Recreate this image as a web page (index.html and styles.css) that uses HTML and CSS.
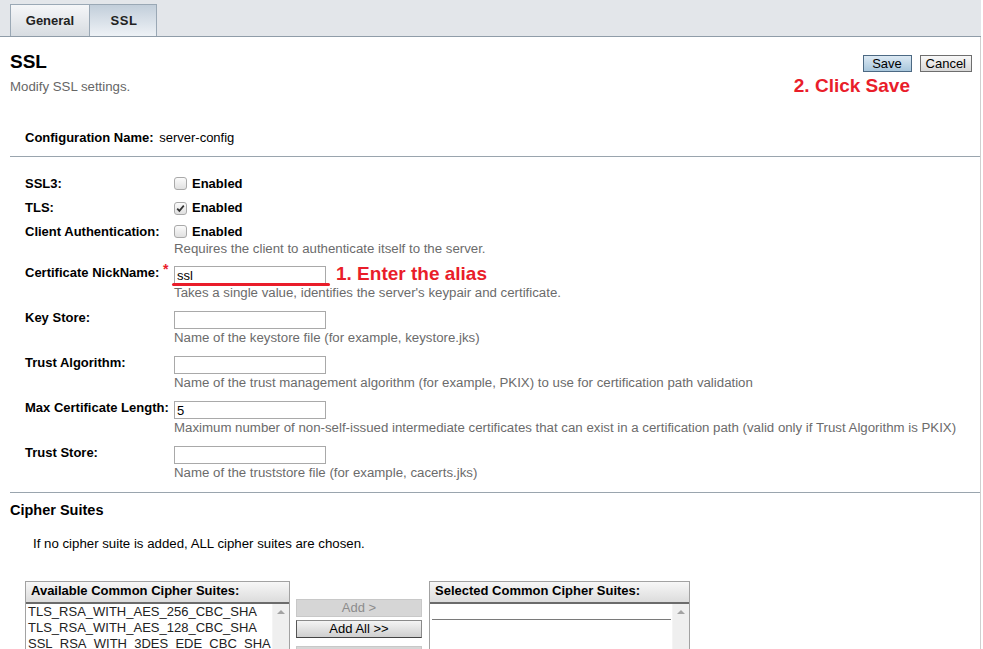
FILE: index.html
```html
<!DOCTYPE html>
<html lang="en">
<head>
  <meta charset="UTF-8" />
  <title>SSL</title>
  <link rel="stylesheet" href="styles.css">
</head>
<body>
  <div class="tabs">
    <a class="tab">General</a>
    <a class="tab active">SSL</a>
  </div>

  <div class="page">
    <div class="title-bar">
      <div>
        <h1>SSL</h1>
        <p class="subtitle">Modify SSL settings.</p>
      </div>
      <div class="actions">
        <button class="btn primary">Save</button>
        <button class="btn">Cancel</button>
        <span class="note note-save">2. Click Save</span>
      </div>
    </div>

    <div class="config-name">
      <span class="label">Configuration Name:</span>
      <span class="value">server-config</span>
    </div>

    <hr>

    <div class="props">
      <div class="prop check-row">
        <label>SSL3:</label>
        <div class="field"><span class="checkbox"></span><b>Enabled</b></div>
      </div>
      <div class="prop check-row">
        <label>TLS:</label>
        <div class="field">
          <span class="checkbox">
            <svg width="11" height="11" viewBox="0 0 11 11"><path d="M2.2 5.6 L4.4 7.9 L8.8 2.6" fill="none" stroke="#333" stroke-width="1.7"/></svg>
          </span><b>Enabled</b>
        </div>
      </div>
      <div class="prop check-row wide">
        <label>Client Authentication:</label>
        <div class="field">
          <div><span class="checkbox"></span><b>Enabled</b></div>
          <div class="help">Requires the client to authenticate itself to the server.</div>
        </div>
      </div>
      <div class="prop">
        <label>Certificate NickName: <sup class="req">*</sup></label>
        <div class="field marked">
          <input type="text" value="ssl">
          <span class="underline"></span>
          <span class="note note-alias">1. Enter the alias</span>
          <div class="help">Takes a single value, identifies the server's keypair and certificate.</div>
        </div>
      </div>
      <div class="prop">
        <label>Key Store:</label>
        <div class="field">
          <input type="text">
          <div class="help">Name of the keystore file (for example, keystore.jks)</div>
        </div>
      </div>
      <div class="prop">
        <label>Trust Algorithm:</label>
        <div class="field">
          <input type="text">
          <div class="help">Name of the trust management algorithm (for example, PKIX) to use for certification path validation</div>
        </div>
      </div>
      <div class="prop">
        <label>Max Certificate Length:</label>
        <div class="field">
          <input type="text" value="5">
          <div class="help">Maximum number of non-self-issued intermediate certificates that can exist in a certification path (valid only if Trust Algorithm is PKIX)</div>
        </div>
      </div>
      <div class="prop">
        <label>Trust Store:</label>
        <div class="field">
          <input type="text">
          <div class="help">Name of the truststore file (for example, cacerts.jks)</div>
        </div>
      </div>
    </div>

    <hr class="section-end">

    <h2>Cipher Suites</h2>
    <p class="cipher-help">If no cipher suite is added, ALL cipher suites are chosen.</p>

    <div class="cipher-picker">
      <div class="listbox available">
        <div class="listbox-head">Available Common Cipher Suites:</div>
        <div class="listbox-body">
          <ul>
            <li>TLS_RSA_WITH_AES_256_CBC_SHA</li>
            <li>TLS_RSA_WITH_AES_128_CBC_SHA</li>
            <li>SSL_RSA_WITH_3DES_EDE_CBC_SHA</li>
            <li>SSL_RSA_WITH_RC4_128_SHA</li>
            <li>SSL_RSA_WITH_RC4_128_MD5</li>
          </ul>
          <div class="scroll"><span class="arrow"></span></div>
        </div>
      </div>

      <div class="mover">
        <button class="move" disabled>Add &gt;</button>
        <button class="move">Add All &gt;&gt;</button>
        <button class="move split" disabled>&lt; Remove</button>
        <button class="move">&lt;&lt; Remove All</button>
      </div>

      <div class="listbox selected">
        <div class="listbox-head">Selected Common Cipher Suites:</div>
        <div class="listbox-body">
          <ul>
            <li class="empty"></li>
          </ul>
          <div class="scroll"><span class="arrow"></span></div>
        </div>
      </div>
    </div>
  </div>
</body>
</html>
```

FILE: styles.css
```css
html { overflow: hidden; }
body {
  margin: 0;
  font-family: "Liberation Sans", Arial, sans-serif;
  font-size: 13px;
  color: #000;
  background: #fff;
}

/* tab strip */
.tabs {
  width: 981px;
  height: 37px;
  box-sizing: border-box;
  background: #e3e6ea;
  border-bottom: 1px solid #8f9ca8;
  padding-left: 10px;
  display: flex;
  align-items: flex-end;
}
.tab {
  height: 32px;
  box-sizing: border-box;
  border: 1px solid #9aa8b5;
  border-bottom: none;
  display: flex;
  align-items: center;
  justify-content: center;
  font-weight: bold;
  font-size: 13px;
  color: #222;
  background: linear-gradient(#f5f6f8, #d7dce1);
  width: 80px;
}
.tab.active {
  width: 68px;
  margin-left: -1px;
  padding-left: 2px;
  letter-spacing: 0.5px;
  background: linear-gradient(#c2ceda, #eef2f6);
}

.page {
  width: 981px;
  box-sizing: border-box;
  padding: 0 0 0 10px;
  border-right: 1px solid #cfcfcf;
  min-height: 640px;
}

/* title */
.title-bar {
  display: flex;
  justify-content: space-between;
  align-items: flex-start;
  padding-right: 8px;
}
h1 {
  margin: 13px 0 0;
  font-size: 19px;
  line-height: 23px;
  font-weight: bold;
}
.subtitle {
  margin: 7px 0 0;
  line-height: 14px;
  font-size: 13.25px;
  color: #666;
}
.actions {
  position: relative;
  margin-top: 18px;
  display: flex;
  gap: 8px;
}
.btn {
  font-family: inherit;
  font-size: 13px;
  height: 17px;
  padding: 0 5px;
  line-height: 14px;
  border: 1px solid #6e6e6e;
  background: linear-gradient(#f8f8f8, #d8d8d8);
  color: #000;
}
.btn.primary {
  width: 49px;
  border-color: #4c6983;
  background: linear-gradient(#dce9f3, #a8c6dc);
}

.note {
  position: absolute;
  color: #e91d2a;
  font-weight: bold;
  font-size: 19px;
  line-height: 22px;
  white-space: nowrap;
}
.note-save {
  top: 20px;
  right: 62px;
}

.config-name {
  margin: 37px 0 0 15px;
  line-height: 14px;
}
.config-name .label {
  font-weight: bold;
  margin-right: 2px;
}

hr {
  border: none;
  border-top: 1px solid #9aa5ae;
  margin: 11px 0 0;
  height: 0;
}

/* property sheet */
.props {
  padding: 17px 0 0 15px;
}
.prop {
  display: grid;
  grid-template-columns: 149px 1fr;
  margin-bottom: 11px;
}
.prop label {
  font-weight: bold;
  line-height: 14px;
  white-space: nowrap;
}
.check-row {
  margin-bottom: 4px;
}
.check-row label,
.check-row .field > b,
.check-row .field > div:first-child {
  line-height: 20px;
}
.check-row.wide {
  margin-bottom: 10px;
}
.checkbox {
  display: inline-flex;
  align-items: center;
  justify-content: center;
  width: 13px;
  height: 13px;
  box-sizing: border-box;
  border: 1px solid #a9a9a9;
  border-radius: 3px;
  background: linear-gradient(#fbfbfb, #e0e0e0);
  vertical-align: -2px;
  margin-right: 5px;
}
.req {
  color: #e91d2a;
  font-size: 14px;
  vertical-align: 3px;
  line-height: 0;
}
.field input {
  display: block;
  width: 152px;
  height: 18px;
  box-sizing: border-box;
  border: 1px solid #a9a9a9;
  padding: 0 2px;
  font-family: inherit;
  font-size: 13px;
  margin: 0;
}
.help {
  margin-top: 2px;
  line-height: 14px;
  font-size: 13.25px;
  color: #6b6b6b;
  white-space: nowrap;
}
.check-row .help {
  margin-top: 0;
}
.marked {
  position: relative;
}
.underline {
  position: absolute;
  left: -2px;
  top: 17px;
  width: 158px;
  height: 3px;
  border-radius: 2px;
  background: #e91d2a;
}
.note-alias {
  left: 162px;
  top: -3px;
}

hr.section-end {
  margin-top: 12px;
}

h2 {
  margin: 9px 0 0;
  font-size: 14.5px;
  line-height: 16px;
}
.cipher-help {
  margin: 19px 0 0 23px;
  line-height: 14px;
  font-size: 13.25px;
}

/* cipher suite picker */
.cipher-picker {
  display: flex;
  align-items: flex-start;
  margin: 30px 0 0 15px;
}
.listbox {
  box-sizing: border-box;
  border: 1px solid #a2a2a2;
  border-bottom: none;
}
.available { width: 265px; }
.selected { width: 261px; }
.listbox-head {
  height: 20px;
  line-height: 18px;
  padding-left: 5px;
  font-weight: bold;
  font-size: 13px;
  background: linear-gradient(#f7f7f7, #dcdcdc);
  border-bottom: 2px solid #6b6b6b;
}
.listbox-body {
  display: flex;
  height: 100px;
}
.listbox ul {
  flex: 1;
  list-style: none;
  margin: 0;
  padding: 0 0 0 2px;
  font-size: 13px;
  line-height: 16px;
  color: #222;
}
.listbox li.empty {
  height: 15px;
  margin-right: 1px;
  border-bottom: 1px solid #7a7a7a;
}
.scroll {
  width: 17px;
  background: #efefef;
  border-left: 1px solid #f4f4f4;
  display: flex;
  justify-content: center;
  padding-top: 6px;
  box-sizing: border-box;
}
.arrow {
  width: 0;
  height: 0;
  border-left: 4px solid transparent;
  border-right: 4px solid transparent;
  border-bottom: 4px solid #a3a3a3;
}

.mover {
  width: 126px;
  margin: 18px 7px 0 6px;
  display: flex;
  flex-direction: column;
  gap: 3px;
}
.move {
  height: 18px;
  padding: 0;
  font-family: inherit;
  font-size: 13px;
  line-height: 16px;
  color: #000;
  border: 1px solid #8a8a8a;
  border-bottom-color: #444;
  border-left-color: #555;
  background: linear-gradient(#f4f4f4, #cfcfcf);
}
.move.split {
  margin-top: 5px;
}
.move:disabled {
  color: #8c8c8c;
  border-color: #c8c8c8;
  background: #d6d6d6;
}
```
